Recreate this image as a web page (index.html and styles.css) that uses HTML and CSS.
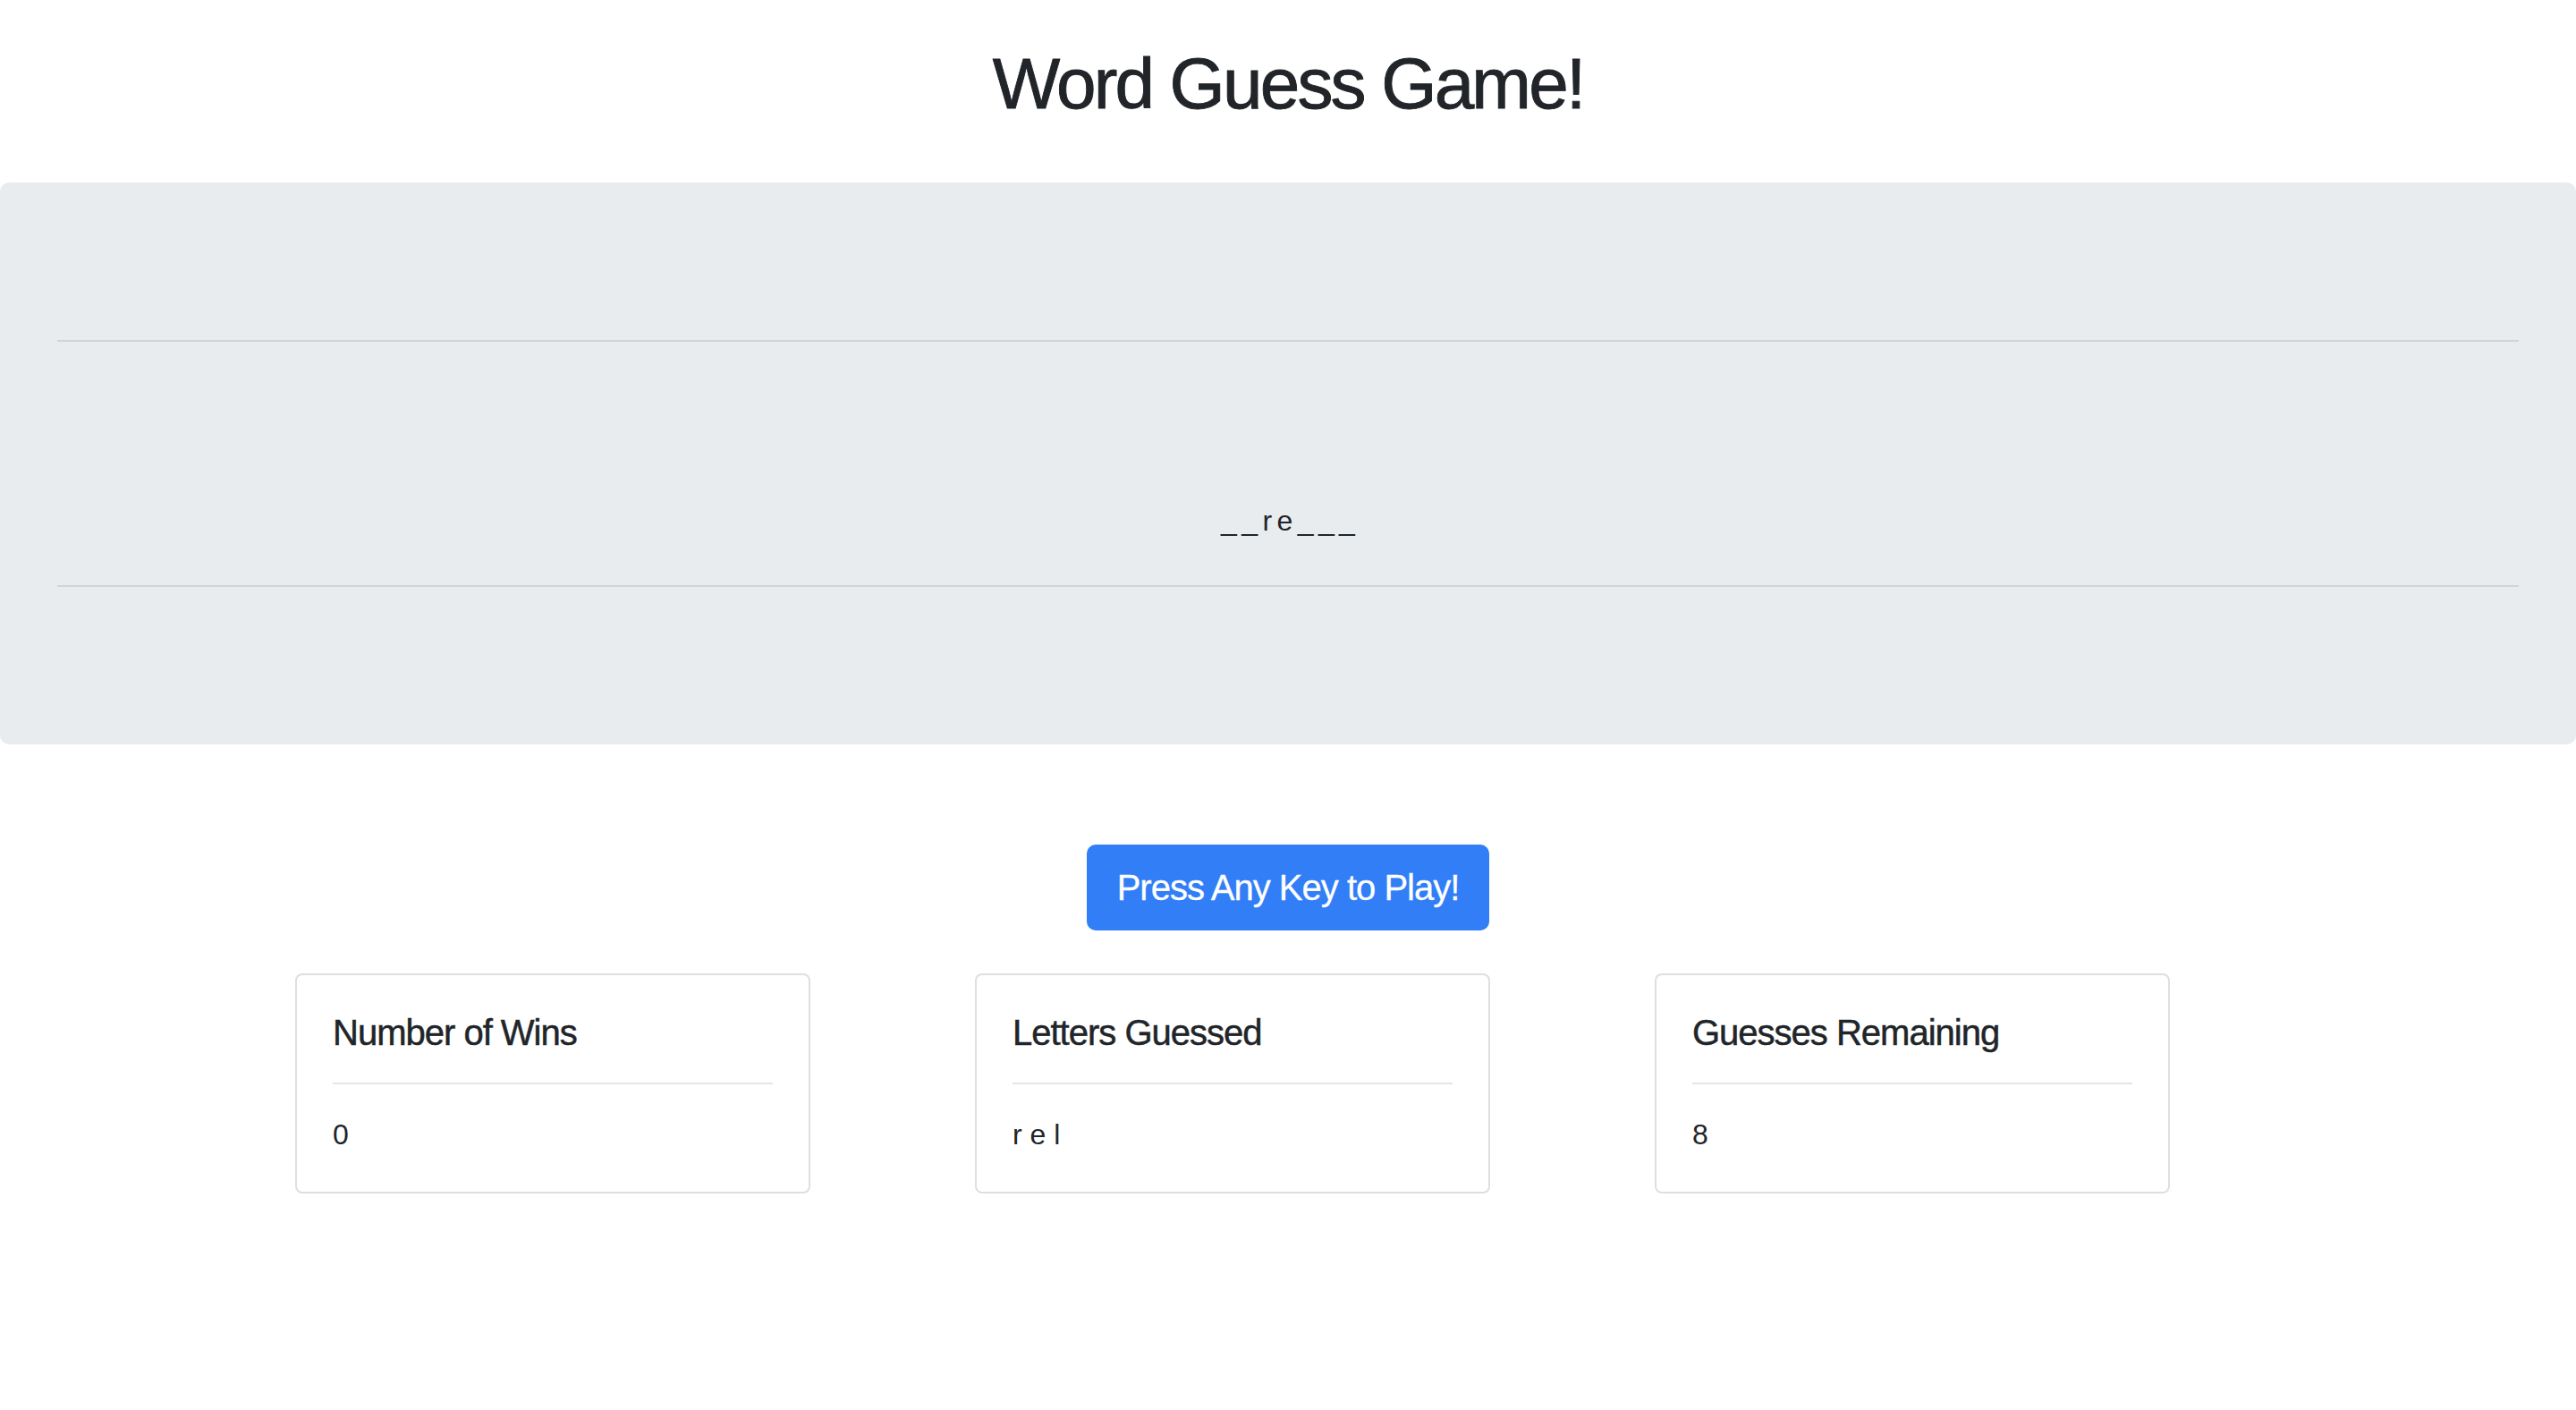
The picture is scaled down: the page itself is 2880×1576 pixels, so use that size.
FILE: index.html
```html
<!DOCTYPE html>
<html lang="en">
<head>
<meta charset="utf-8">
<title>Word Guess Game!</title>
<link rel="stylesheet" href="styles.css">
</head>
<body>
  <h1 class="page-title">Word Guess Game!</h1>

  <section class="jumbotron">
    <hr class="jt-rule">
    <div class="blank"></div>
    <p class="word">_ _ r e _ _ _</p>
    <hr class="jt-rule">
  </section>

  <div class="start">
    <button class="btn-play" type="button">Press Any Key to Play!</button>
  </div>

  <div class="cards">
    <div class="col">
      <div class="card">
        <h5 class="card-title">Number of Wins</h5>
        <hr class="card-rule">
        <p class="card-text">0</p>
      </div>
    </div>
    <div class="col">
      <div class="card">
        <h5 class="card-title">Letters Guessed</h5>
        <hr class="card-rule">
        <p class="card-text">r e l</p>
      </div>
    </div>
    <div class="col">
      <div class="card">
        <h5 class="card-title">Guesses Remaining</h5>
        <hr class="card-rule">
        <p class="card-text">8</p>
      </div>
    </div>
  </div>
</body>
</html>
```

FILE: styles.css
```css
html, body {
  margin: 0;
  padding: 0;
  background: #ffffff;
}

body {
  font-family: "Liberation Sans", Arial, Helvetica, sans-serif;
  font-size: 32px;
  line-height: 1.5;
  color: #212529;
}

.page-title {
  margin: 46px 0 62px;
  font-size: 80px;
  line-height: 96px;
  font-weight: 400;
  letter-spacing: -2.8px;
  text-align: center;
  color: #212529;
  -webkit-text-stroke: 0.9px #212529;
}

.jumbotron {
  background: #e9ecef;
  border-radius: 10px;
  padding: 128px 64px;
  margin: 0 0 112px;
}

.jt-rule {
  border: 0;
  border-top: 2px solid rgba(0, 0, 0, 0.1);
  margin: 48px 0;
  height: 0;
}

.blank {
  height: 96px;
  margin: 0 0 32px;
}

.word {
  margin: 0;
  line-height: 48px;
  text-align: center;
  word-spacing: -3.5px;
}

.start {
  display: flex;
  justify-content: center;
  margin-bottom: 48px;
}

.btn-play {
  font-family: "Liberation Sans", Arial, Helvetica, sans-serif;
  font-size: 40px;
  line-height: 60px;
  letter-spacing: -1px;
  padding: 16px 32px;
  color: #ffffff;
  background: #317ef6;
  border: 2px solid #317ef6;
  border-radius: 10px;
  cursor: pointer;
  -webkit-text-stroke: 0.3px #ffffff;
}

.cards {
  width: 2280px;
  margin: 0 auto;
  display: grid;
  grid-template-columns: repeat(3, 1fr);
}

.col {
  padding: 0 30px;
}

.card {
  width: 576px;
  box-sizing: border-box;
  border: 2px solid rgba(0, 0, 0, 0.125);
  border-radius: 8px;
  background: #ffffff;
  padding: 40px;
}

.card-title {
  margin: 0 0 24px;
  font-size: 40px;
  line-height: 48px;
  font-weight: 400;
  letter-spacing: -1px;
  -webkit-text-stroke: 0.5px #212529;
}

.card-rule {
  border: 0;
  border-top: 2px solid rgba(0, 0, 0, 0.1);
  margin: 32px 0;
  height: 0;
}

.card-text {
  margin: 0;
  line-height: 48px;
}
```
